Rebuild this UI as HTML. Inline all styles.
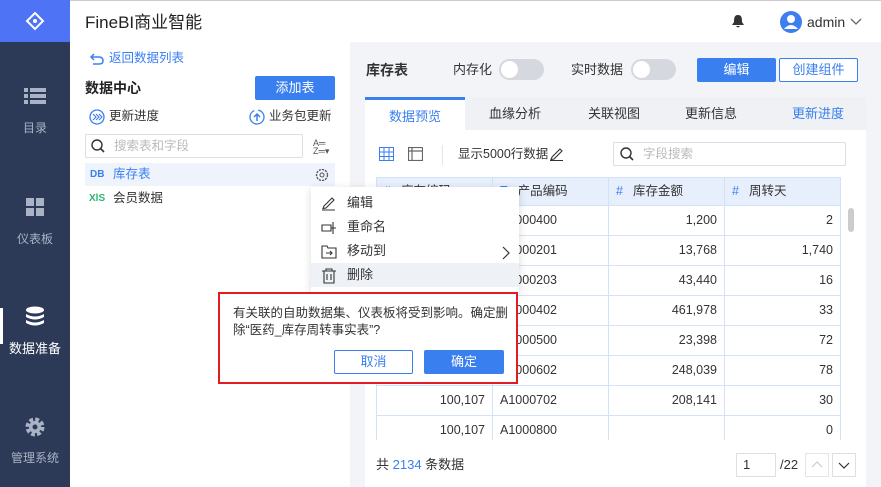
<!DOCTYPE html>
<html><head><meta charset="utf-8"><style>
*{box-sizing:border-box;margin:0;padding:0}
body{width:881px;height:487px;overflow:hidden;font-family:"Liberation Sans","Noto Sans CJK SC",sans-serif;font-size:13px;line-height:1.15;color:#333;position:relative;background:#fff}
.abs{position:absolute}
.side{left:0;top:0;width:70px;height:487px;background:#2c3a57}
.logo{left:0;top:0;width:70px;height:42px;background:#4f73f5}
.nav{width:70px;text-align:center;color:#aab3c5;font-size:12px}
.hdr{left:70px;top:0;width:811px;height:42px;background:#fff;border-top:1px solid #ccc}
.right{left:350px;top:42px;width:531px;height:445px;background:#f3f4f7}
.btn{position:absolute;border-radius:2px;text-align:center;font-size:13px}
table{border-collapse:collapse;position:absolute;left:376px;top:177px;font-size:12.5px}
td{border:1px solid #d4e2f7;height:30px;padding:0 7px;width:116px}
td.r{text-align:right}
tr.h td{background:#e7effc;height:28px}
.hash{color:#3a7ff0;margin-right:10px}
.mi{position:absolute;left:0;width:208px;height:24px;line-height:24px;padding-left:36px;font-size:13px}
</style></head><body>
<div class="abs side"></div>
<div class="abs logo"><svg width="70" height="42"><g fill="none" stroke="#fff" stroke-width="2"><path d="M35 13 L43 21 L35 29 L27 21 Z"/></g><circle cx="35" cy="21" r="2" fill="#fff"/></svg></div>
<svg class="abs" style="left:24px;top:87px" width="22" height="18"><g fill="#aab3c5"><rect x="0" y="1" width="4" height="4"/><rect x="6" y="1" width="16" height="4"/><rect x="0" y="7" width="4" height="4"/><rect x="6" y="7" width="16" height="4"/><rect x="0" y="13" width="4" height="4"/><rect x="6" y="13" width="16" height="4"/></g></svg>
<div class="abs nav" style="top:122px">目录</div>
<svg class="abs" style="left:26px;top:198px" width="18" height="18"><g fill="#aab3c5"><rect x="0" y="0" width="8" height="8"/><rect x="10" y="0" width="8" height="8"/><rect x="0" y="10" width="8" height="8"/><rect x="10" y="10" width="8" height="8"/></g></svg>
<div class="abs nav" style="top:233px">仪表板</div>
<div class="abs" style="left:0;top:308px;width:3px;height:36px;background:#fff"></div>
<svg class="abs" style="left:25px;top:306px" width="20" height="22"><g fill="#fff"><ellipse cx="10" cy="4" rx="9" ry="3.5"/><path d="M1 8 Q10 13 19 8 V11 Q10 16 1 11Z"/><path d="M1 14 Q10 19 19 14 V17 Q10 22 1 17Z"/></g></svg>
<div class="abs nav" style="top:342px;color:#fff;font-size:13px">数据准备</div>
<svg class="abs" style="left:24px;top:416px" width="22" height="22"><circle cx="11" cy="11" r="7" fill="none" stroke="#aab3c5" stroke-width="5" stroke-dasharray="3.5 2"/><circle cx="11" cy="11" r="6" fill="#aab3c5"/><circle cx="11" cy="11" r="2.5" fill="#2c3a57"/></svg>
<div class="abs nav" style="top:452px">管理系统</div>

<div class="abs hdr"><div class="abs" style="left:15px;top:12px;font-size:17px;color:#222">FineBI商业智能</div>
<svg class="abs" style="left:661px;top:13px" width="14" height="15"><path d="M7 1 C3 1 3 5 3 8 L1 11 H13 L11 8 C11 5 11 1 7 1Z M5 12 H9 Q7 15 5 12Z" fill="#333"/></svg>
<svg class="abs" style="left:710px;top:10px" width="22" height="22"><circle cx="11" cy="11" r="11" fill="#3d7ff0"/><circle cx="11" cy="8" r="4" fill="#fff"/><path d="M4 18 Q11 10 18 18" fill="#fff"/></svg>
<div class="abs" style="left:737px;top:13px;font-size:14px">admin</div>
<svg class="abs" style="left:780px;top:17px" width="12" height="8"><path d="M1 1 L6 6 L11 1" fill="none" stroke="#666" stroke-width="1.3"/></svg>
</div>

<!-- left panel -->
<svg class="abs" style="left:90px;top:53px" width="14" height="12"><path d="M4 1 L1 4 L4 7 M1 4 H9 Q13 4 13 8 Q13 11 9 11 H3" fill="none" stroke="#3a7ff0" stroke-width="1.5"/></svg>
<div class="abs" style="left:109px;top:51px;color:#3a7ff0;font-size:12.5px">返回数据列表</div>
<div class="abs" style="left:85px;top:80px;font-size:14px;font-weight:bold;color:#222">数据中心</div>
<div class="btn" style="left:255px;top:76px;width:80px;height:24px;line-height:24px;background:#3a7ff0;color:#fff">添加表</div>
<svg class="abs" style="left:89px;top:109px" width="16" height="16"><circle cx="8" cy="8" r="7" fill="none" stroke="#3a7ff0" stroke-width="1.3"/><path d="M4 5 L7 8 L4 11 M7 5 L10 8 L7 11 M10 5 L13 8 L10 11" fill="none" stroke="#3a7ff0" stroke-width="1.1"/></svg>
<div class="abs" style="left:109px;top:109px;font-size:12.5px">更新进度</div>
<svg class="abs" style="left:249px;top:109px" width="16" height="16"><circle cx="8" cy="8" r="7" fill="none" stroke="#3a7ff0" stroke-width="1.3" stroke-dasharray="30 4"/><path d="M8 12 V5 M5 8 L8 5 L11 8" fill="none" stroke="#3a7ff0" stroke-width="1.5"/></svg>
<div class="abs" style="left:269px;top:109px;font-size:12.5px">业务包更新</div>
<div class="abs" style="left:85px;top:134px;width:218px;height:24px;border:1px solid #dcdfe6;border-radius:2px"></div>
<svg class="abs" style="left:91px;top:139px" width="14" height="14"><circle cx="6" cy="6" r="5" fill="none" stroke="#333" stroke-width="1.4"/><path d="M9.5 9.5 L13 13" stroke="#333" stroke-width="1.6"/></svg>
<div class="abs" style="left:114px;top:139px;color:#bbb;font-size:12.5px">搜索表和字段</div>
<div class="abs" style="left:313px;top:139px;font-size:9px;line-height:8px;color:#555">A═<br>Z═▾</div>
<div class="abs" style="left:85px;top:163px;width:250px;height:23px;background:#eef3fc"></div>
<div class="abs" style="left:90px;top:169px;color:#3a7ff0;font-size:10px;font-weight:bold">DB</div>
<div class="abs" style="left:113px;top:167px;color:#3a7ff0;font-size:12.5px">库存表</div>
<svg class="abs" style="left:315px;top:168px" width="14" height="14"><circle cx="7" cy="7" r="5.5" fill="none" stroke="#555" stroke-width="1.3" stroke-dasharray="2.2 1"/><circle cx="7" cy="7" r="2" fill="none" stroke="#555"/></svg>
<div class="abs" style="left:89px;top:193px;color:#2bb673;font-size:10px;font-weight:bold">XlS</div>
<div class="abs" style="left:113px;top:191px;font-size:12.5px">会员数据</div>

<!-- right -->
<div class="abs right"></div>
<div class="abs" style="left:366px;top:62px;font-size:14px;font-weight:bold;color:#333">库存表</div>
<div class="abs" style="left:453px;top:63px">内存化</div>
<div class="abs" style="left:499px;top:59px;width:45px;height:21px;border-radius:11px;background:#d5d8de"><div style="position:absolute;left:2px;top:2px;width:17px;height:17px;border-radius:50%;background:#fff"></div></div>
<div class="abs" style="left:571px;top:63px">实时数据</div>
<div class="abs" style="left:631px;top:59px;width:45px;height:21px;border-radius:11px;background:#d5d8de"><div style="position:absolute;left:2px;top:2px;width:17px;height:17px;border-radius:50%;background:#fff"></div></div>
<div class="btn" style="left:697px;top:58px;width:79px;height:24px;line-height:24px;background:#3a7ff0;color:#fff">编辑</div>
<div class="btn" style="left:779px;top:58px;width:79px;height:24px;line-height:22px;border:1px solid #3a7ff0;color:#3a7ff0;background:#fff">创建组件</div>
<div class="abs" style="left:365px;top:97px;width:501px;height:33px;background:#eff1f4"></div>
<div class="abs" style="left:365px;top:97px;width:100px;height:33px;background:#fff;border-top:3px solid #3a7ff0;color:#3a7ff0;text-align:center;line-height:34px">数据预览</div>
<div class="abs" style="left:489px;top:107px;color:#333">血缘分析</div>
<div class="abs" style="left:588px;top:107px;color:#333">关联视图</div>
<div class="abs" style="left:685px;top:107px;color:#333">更新信息</div>
<div class="abs" style="left:792px;top:107px;color:#3a7ff0">更新进度</div>
<div class="abs" style="left:365px;top:130px;width:501px;height:357px;background:#fff"></div>
<svg class="abs" style="left:379px;top:147px" width="15" height="14"><g fill="none" stroke="#3a7ff0" stroke-width="1"><rect x="0.5" y="0.5" width="14" height="13"/><path d="M5 0V14M10 0V14M0 5H15M0 9.5H15"/></g></svg>
<svg class="abs" style="left:408px;top:147px" width="15" height="14"><g fill="none" stroke="#666" stroke-width="1.2"><rect x="0.5" y="0.5" width="14" height="13"/><path d="M4 0V14M0 4H15"/></g></svg>
<div class="abs" style="left:442px;top:145px;width:1px;height:20px;background:#e5e5e5"></div>
<div class="abs" style="left:458px;top:147px;font-size:12.5px">显示5000行数据</div>
<svg class="abs" style="left:549px;top:146px" width="15" height="15"><path d="M3 11 L11 3 L13 5 L5 13 L2 13.5Z M1 14.5 H14" fill="none" stroke="#333" stroke-width="1.1"/></svg>
<div class="abs" style="left:613px;top:142px;width:233px;height:24px;border:1px solid #dcdfe6;border-radius:2px"></div>
<svg class="abs" style="left:620px;top:147px" width="14" height="14"><circle cx="6" cy="6" r="5" fill="none" stroke="#333" stroke-width="1.4"/><path d="M9.5 9.5 L13 13" stroke="#333" stroke-width="1.6"/></svg>
<div class="abs" style="left:643px;top:147px;color:#bbb;font-size:12.5px">字段搜索</div>
<table>
<tr class="h"><td><span class="hash">#</span>库存编码</td><td><span class="hash">T</span>产品编码</td><td><span class="hash">#</span>库存金额</td><td><span class="hash">#</span>周转天</td></tr>
<tr><td class="r">100,107</td><td>A1000400</td><td class="r">1,200</td><td class="r">2</td></tr>
<tr><td class="r">100,107</td><td>A1000201</td><td class="r">13,768</td><td class="r">1,740</td></tr>
<tr><td class="r">100,107</td><td>A1000203</td><td class="r">43,440</td><td class="r">16</td></tr>
<tr><td class="r">100,107</td><td>A1000402</td><td class="r">461,978</td><td class="r">33</td></tr>
<tr><td class="r">100,107</td><td>A1000500</td><td class="r">23,398</td><td class="r">72</td></tr>
<tr><td class="r">100,107</td><td>A1000602</td><td class="r">248,039</td><td class="r">78</td></tr>
<tr><td class="r">100,107</td><td>A1000702</td><td class="r">208,141</td><td class="r">30</td></tr>
<tr><td class="r">100,107</td><td>A1000800</td><td class="r"></td><td class="r">0</td></tr>
</table>
<div class="abs" style="left:365px;top:440px;width:501px;height:47px;background:#fff"></div>
<div class="abs" style="left:848px;top:208px;width:6px;height:24px;border-radius:3px;background:#ccc"></div>
<div class="abs" style="left:376px;top:458px">共 <span style="color:#3a7ff0">2134</span> 条数据</div>
<div class="abs" style="left:736px;top:453px;width:40px;height:24px;border:1px solid #dcdfe6;padding:4px 6px">1</div>
<div class="abs" style="left:780px;top:458px">/22</div>
<div class="abs" style="left:805px;top:453px;width:24px;height:24px;border:1px solid #e5e5e5"><svg width="22" height="22"><path d="M6 13 L11 8 L16 13" fill="none" stroke="#ccc" stroke-width="1.2"/></svg></div>
<div class="abs" style="left:832px;top:453px;width:24px;height:24px;border:1px solid #dcdfe6"><svg width="22" height="22"><path d="M6 9 L11 14 L16 9" fill="none" stroke="#333" stroke-width="1.2"/></svg></div>

<!-- context menu -->
<div class="abs" style="left:311px;top:187px;width:208px;height:106px;background:#fff;box-shadow:0 2px 8px rgba(0,0,0,.15)">
<div class="mi" style="top:4px">编辑</div>
<div class="mi" style="top:28px">重命名</div>
<div class="mi" style="top:52px">移动到</div>
<div class="mi" style="top:76px;background:#eef1f6">删除</div>
<svg class="abs" style="left:10px;top:8px" width="16" height="16"><path d="M3 11 L11 3 L13 5 L5 13 L2 13.5Z M1 15 H14" fill="none" stroke="#333" stroke-width="1.1"/></svg>
<svg class="abs" style="left:10px;top:33px" width="16" height="16"><path d="M1 5 H10 V11 H1Z M10 8 H15 M12 2 V14" fill="none" stroke="#333" stroke-width="1.1"/></svg>
<svg class="abs" style="left:10px;top:57px" width="16" height="16"><path d="M1 2 H6 L7 4 H15 V14 H1Z M5 9 H11 M9 7 L11 9 L9 11" fill="none" stroke="#333" stroke-width="1.1"/></svg>
<svg class="abs" style="left:190px;top:59px" width="10" height="14"><path d="M2 1 L8 7 L2 13" fill="none" stroke="#333" stroke-width="1.2"/></svg>
<svg class="abs" style="left:10px;top:81px" width="16" height="16"><path d="M1 3 H15 M5 3 V1 H11 V3 M3 3 V15 H13 V3 M6 6 V12 M10 6 V12" fill="none" stroke="#333" stroke-width="1.1"/></svg>
</div>

<!-- dialog -->
<div class="abs" style="left:218px;top:292px;width:300px;height:92px;background:#fff;border:2px solid #e21c23"></div>
<div class="abs" style="left:233px;top:305px;width:280px;font-size:12.5px;line-height:17px;color:#333">有关联的自助数据集、仪表板将受到影响。确定删除“医药_库存周转事实表”?</div>
<div class="btn" style="left:334px;top:350px;width:79px;height:24px;line-height:22px;border:1px solid #3a7ff0;color:#3a7ff0;background:#fff">取消</div>
<div class="btn" style="left:424px;top:350px;width:80px;height:24px;line-height:24px;background:#3a7ff0;color:#fff">确定</div>
</body></html>
